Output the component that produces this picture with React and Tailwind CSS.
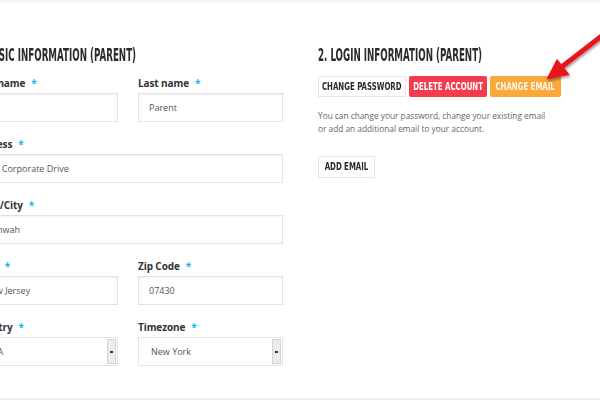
import React from "react";

const condensed = "font-['Liberation_Sans_Narrow','DejaVu_Sans_Condensed','Liberation_Sans',sans-serif]";

const Label = ({ children }) => (
  <div className="mb-[3px] text-[10px] leading-[14px] font-bold text-[#333] whitespace-nowrap tracking-[-0.1px]">
    {children}
    <span className="ml-[6px] text-[#1fb5ee]">*</span>
  </div>
);

const Input = ({ value }) => (
  <div className="h-[29px] border border-[#e3e3e3] bg-white shadow-[inset_0_1px_2px_rgba(0,0,0,0.05)] pl-[10px] flex items-center text-[9px] text-[#555] whitespace-nowrap overflow-hidden">
    {value}
  </div>
);

const Select = ({ value }) => (
  <div className="h-[29px] border border-[#e3e3e3] bg-white flex items-stretch text-[9px] text-[#555]">
    <div className="flex-1 pl-[12px] flex items-center whitespace-nowrap overflow-hidden">{value}</div>
    <div className="w-[9px] my-[1px] mr-[1px] bg-[#ececec] border border-[#d4d4d4] flex items-center justify-center">
      <div className="w-[3px] h-[2px] bg-[#333]" />
    </div>
  </div>
);

const Heading = ({ children }) => (
  <div className={`h-[20px] mb-[11px] text-[17px] leading-[20px] font-bold text-[#2a2a2a] whitespace-nowrap ${condensed}`}>
    <span className="inline-block origin-left scale-x-[0.57]">{children}</span>
  </div>
);

const Btn = ({ children, className }) => (
  <div className={`h-[21px] flex items-center justify-center text-[10.5px] font-bold whitespace-nowrap ${condensed} ${className}`}>
    <span className="inline-block scale-x-[0.74]">{children}</span>
  </div>
);

export default function App() {
  return (
    <div className="relative w-[600px] h-[400px] overflow-hidden bg-white flex flex-col font-['Open_Sans',sans-serif]">
      <div className="h-[3px] bg-[#f6f6f6]" />
      <div className="flex-1 flex pt-[42px] border-b-2 border-[#ececec]">
        <div className="ml-[-27px] w-[310px] shrink-0">
          <Heading>1. BASIC INFORMATION (PARENT)</Heading>
          <div className="grid grid-cols-2 gap-x-[20px]">
            <div>
              <Label>First name</Label>
              <Input value="" />
            </div>
            <div>
              <Label>Last name</Label>
              <Input value="Parent" />
            </div>
          </div>
          <div className="mt-[15px]">
            <Label>Address</Label>
            <Input value="100 Corporate Drive" />
          </div>
          <div className="mt-[15px]">
            <Label>Town/City</Label>
            <Input value="Mahwah" />
          </div>
          <div className="mt-[15px] grid grid-cols-2 gap-x-[20px]">
            <div>
              <Label>State</Label>
              <Input value="New Jersey" />
            </div>
            <div>
              <Label>Zip Code</Label>
              <Input value="07430" />
            </div>
          </div>
          <div className="mt-[15px] grid grid-cols-2 gap-x-[20px]">
            <div>
              <Label>Country</Label>
              <Select value="USA" />
            </div>
            <div>
              <Label>Timezone</Label>
              <Select value="New York" />
            </div>
          </div>
        </div>
        <div className="ml-[35px] w-[270px] shrink-0">
          <Heading>2. LOGIN INFORMATION (PARENT)</Heading>
          <div className="mt-[3px] flex gap-[3px]">
            <Btn className="w-[88px] border border-[#e6e6e6] text-[#2a2a2a] bg-white">CHANGE PASSWORD</Btn>
            <Btn className="w-[78px] bg-[#f33d4f] text-white rounded-[2px]">DELETE ACCOUNT</Btn>
            <Btn className="w-[71px] bg-[#f9a839] text-[#fff6e8] rounded-[2px]">CHANGE EMAIL</Btn>
          </div>
          <p className="mt-[12px] text-[8.3px] leading-[13px] text-[#666] whitespace-nowrap">
            You can change your password, change your existing email
            <br />
            or add an additional email to your account.
          </p>
          <Btn className="mt-[21px] w-[57px] h-[22px] border border-[#e6e6e6] text-[#2a2a2a] bg-white">ADD EMAIL</Btn>
        </div>
      </div>
      <svg className="absolute left-0 top-0 w-[600px] h-[400px] pointer-events-none" viewBox="0 0 600 400">
        <defs>
          <filter id="sh" x="-20%" y="-20%" width="140%" height="140%">
            <feDropShadow dx="1" dy="2" stdDeviation="1.2" floodColor="#000" floodOpacity="0.35" />
          </filter>
        </defs>
        <g filter="url(#sh)" fill="#e8161d" stroke="#e8161d">
          <line x1="561" y1="67.5" x2="612" y2="28" strokeWidth="5" />
          <polygon points="547,79 557,59.5 569,74.5" strokeWidth="1" strokeLinejoin="round" />
        </g>
      </svg>
    </div>
  );
}
